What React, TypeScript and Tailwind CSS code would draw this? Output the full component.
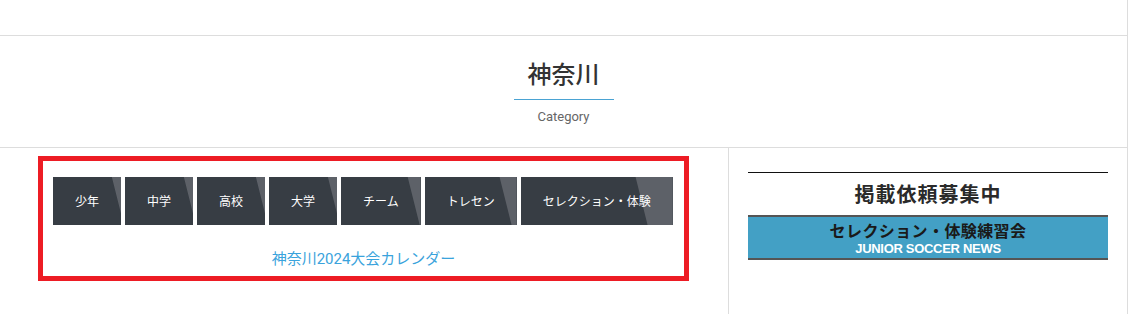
import React from "react";

const cats = ["少年", "中学", "高校", "大学", "チーム", "トレセン", "セレクション・体験"];

export default function App() {
  return (
    <div className="w-[1128px] h-[314px] overflow-hidden border-r border-[#dddddd] bg-white font-['Roboto','Noto_Sans_CJK_JP',sans-serif]">
      <div className="h-[36px] border-b border-[#dddddd]" />
      <div className="h-[112px] border-b border-[#dddddd] flex flex-col items-center pt-[19px]">
        <h1 className="text-[24px] leading-[36px] text-[#333333] font-['Noto_Sans_CJK_JP',sans-serif] font-medium">神奈川</h1>
        <div className="w-[100px] h-px bg-[#4aa3d3] mt-[8px]" />
        <p className="mt-[7px] text-[13px] leading-[20px] text-[#666666]">Category</p>
      </div>
      <div className="flex">
        <div className="w-[729px] border-r border-[#dddddd] h-[170px] pl-[38px] pt-[8px]">
          <div className="w-[651px] border-[5px] border-[#ed1c24] px-[10px] pt-[16px] h-[125px]">
            <div className="flex gap-[4px]">
              {cats.map((c) => (
                <div
                  key={c}
                  className="relative h-[48px] px-[22px] flex items-center bg-[#373d44] text-white text-[12px] font-['Noto_Sans_CJK_JP',sans-serif] overflow-hidden"
                >
                  <span className="absolute inset-0 bg-[#5d6168] [clip-path:polygon(calc(66.67%_+_13.5px)_0,100%_0,100%_100%,calc(66.67%_+_25.5px)_100%)]" />
                  <span className="relative">{c}</span>
                </div>
              ))}
            </div>
            <p className="mt-[24px] text-center text-[15px] leading-[20px] text-[#3aa3dc]">神奈川2024大会カレンダー</p>
          </div>
        </div>
        <div className="w-[398px] px-[19px] pt-[24px]">
          <div className="border-t-[1.5px] border-[#111111]">
            <div className="h-[42px] flex items-center justify-center text-[20px] font-bold text-[#2a2a2a] font-['Noto_Sans_CJK_JP',serif] tracking-[1px]">
              掲載依頼募集中
            </div>
            <div className="border-t-2 border-b-2 border-[#555555] bg-[#43a0c5] h-[45px] flex flex-col items-center justify-center pt-[2px]">
              <div className="text-[16px] leading-[19px] font-bold text-[#1a1a1a] font-['Noto_Sans_CJK_JP',serif] tracking-[0.4px]">セレクション・体験練習会</div>
              <div className="text-[13px] leading-[17px] font-bold text-white font-['Liberation_Sans',sans-serif] tracking-[-0.3px]">JUNIOR SOCCER NEWS</div>
            </div>
          </div>
        </div>
      </div>
    </div>
  );
}
